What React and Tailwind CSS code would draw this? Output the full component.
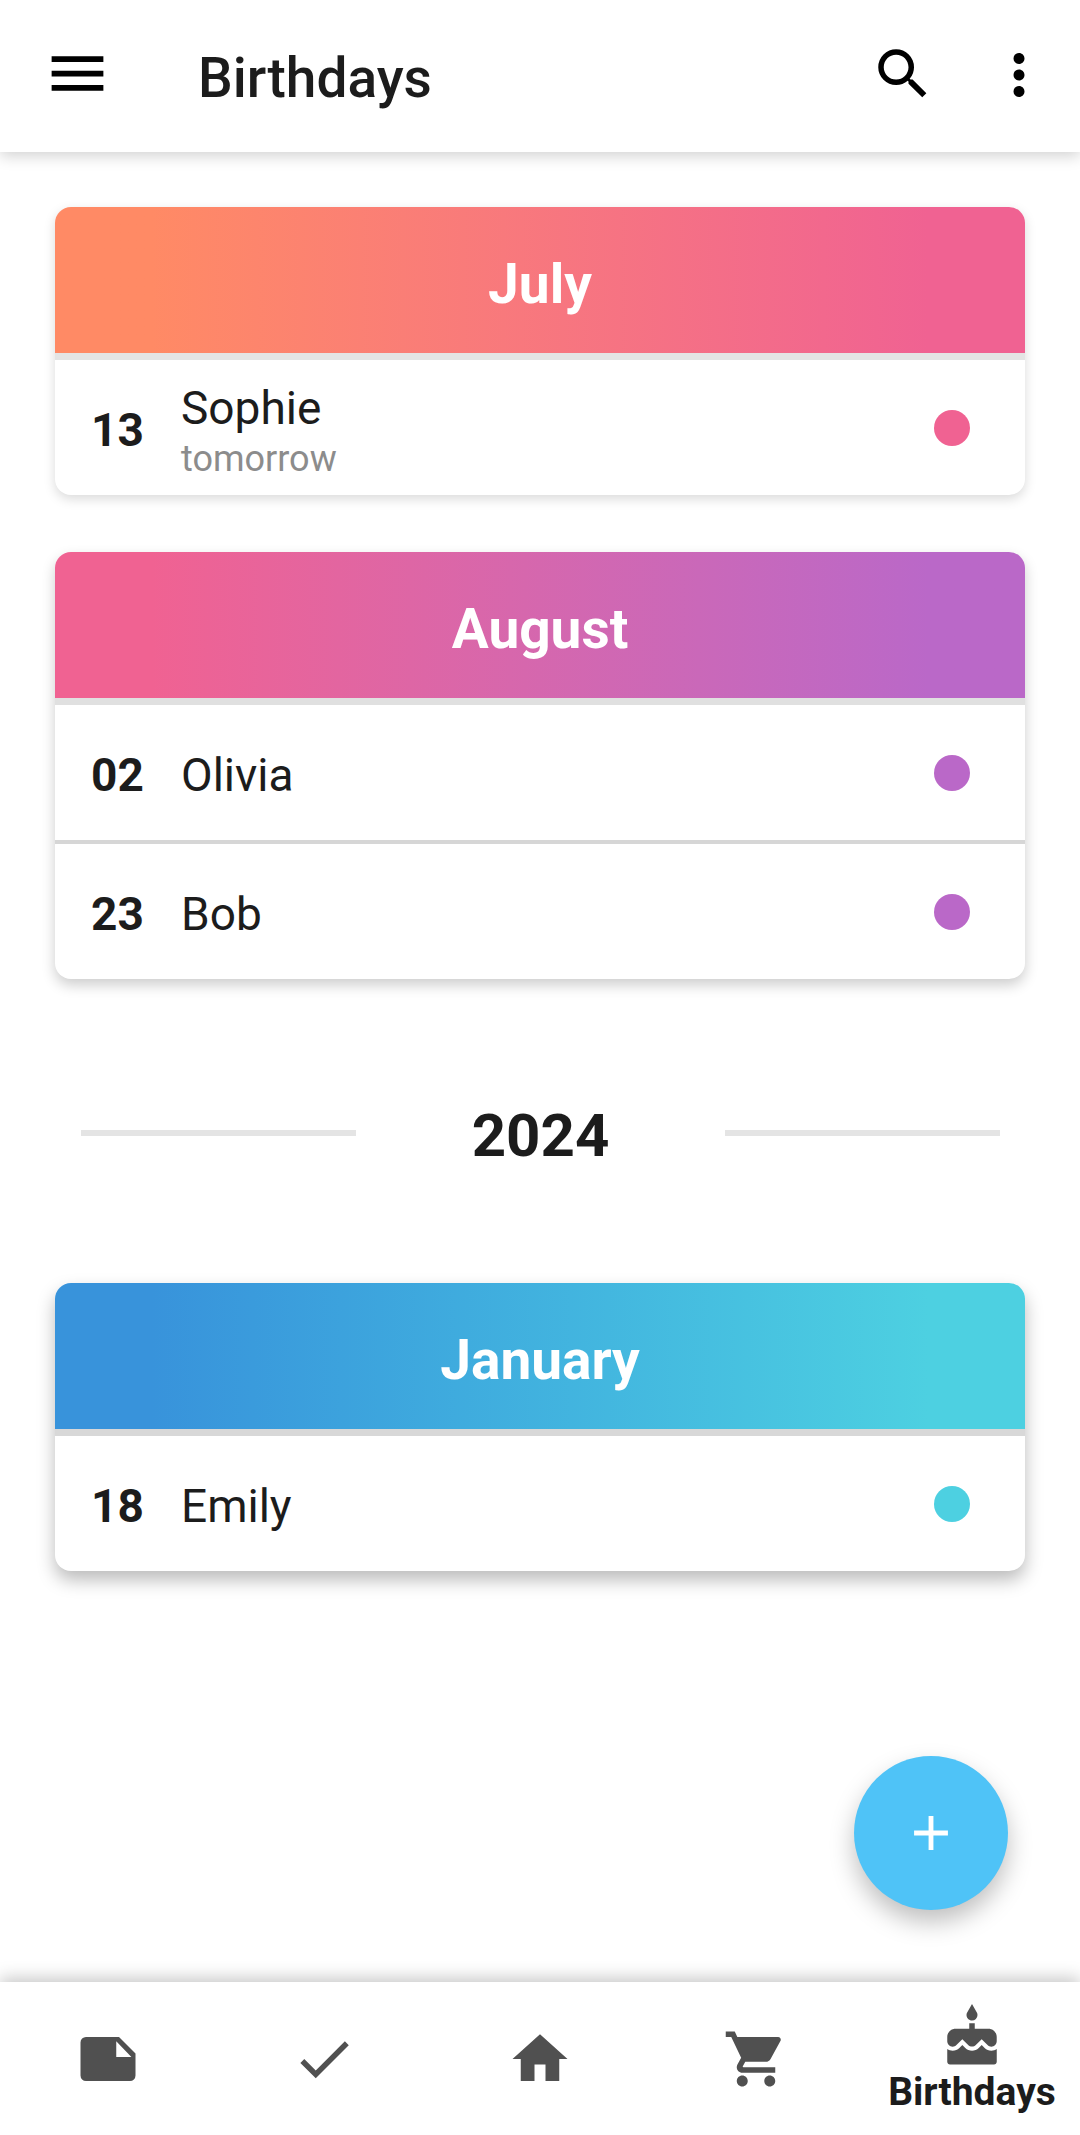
import { MdMenu, MdSearch, MdMoreVert, MdCheck, MdHome, MdShoppingCart, MdCake, MdAdd } from 'react-icons/md'

function NoteIcon({ className }) {
  return (
    <svg viewBox="0 0 24 24" className={className} fill="currentColor">
      <path fillRule="evenodd" d="M4 4h12l6 6v8a2 2 0 0 1-2 2H4a2 2 0 0 1-2-2V6a2 2 0 0 1 2-2zm11 1.500v5.800h5.500z" />
    </svg>
  )
}

const MONTHS = [
  {
    name: 'July',
    gradient: 'bg-gradient-to-r from-[#ff8a65] from-10% to-[#f06292] to-90%',
    dot: 'bg-[#f06292]',
    shadow: 'shadow-[0_4px_12px_rgba(0,0,0,0.15)]',
    band: 'border-[#e4e4e4]',
    people: [{ day: '13', name: 'Sophie', note: 'tomorrow' }],
  },
  {
    name: 'August',
    gradient: 'bg-gradient-to-r from-[#f06292] from-10% to-[#ba68c8] to-90%',
    dot: 'bg-[#ba68c8]',
    shadow: 'shadow-[0_6px_14px_rgba(0,0,0,0.2)]',
    band: 'border-[#e0e0e0]',
    people: [
      { day: '02', name: 'Olivia' },
      { day: '23', name: 'Bob' },
    ],
  },
]

const JANUARY = {
  name: 'January',
  gradient: 'bg-gradient-to-r from-[#3893db] from-10% to-[#4dd0e1] to-90%',
  dot: 'bg-[#4dd0e1]',
  shadow: 'shadow-[0_9px_18px_rgba(0,0,0,0.27)]',
  band: 'border-[#d8d8d8]',
  people: [{ day: '18', name: 'Emily' }],
}

function MonthCard({ month }) {
  return (
    <div className={`mx-[55px] overflow-hidden rounded-[16px] bg-white ${month.shadow}`}>
      <div className={`flex h-[146px] items-center justify-center pt-[8px] ${month.gradient}`}>
        <span className="text-[55px] font-bold text-white">{month.name}</span>
      </div>
      {month.people.map((p, i) => (
        <div
          key={p.day}
          className={`flex items-center pr-[55px] pl-[36px] ${i === 0 ? `h-[142px] border-t-[7px] ${month.band}` : 'h-[139px] border-t-[4px] border-[#d6d6d6]'}`}
        >
          <span className="w-[54px] pt-[6px] text-[46px] font-bold text-[#1c1c1c]">{p.day}</span>
          <div className={`ml-[36px] flex-1 ${p.note ? 'pt-[11px]' : 'pt-[4px]'}`}>
            <div className="text-[46px] leading-[52px] text-[#1c1c1c]">{p.name}</div>
            {p.note && <div className="text-[36px] leading-[50px] text-[#8c8c8c]">{p.note}</div>}
          </div>
          <div className={`h-[36px] w-[36px] rounded-full ${month.dot}`} />
        </div>
      ))}
    </div>
  )
}

export default function App() {
  return (
    <div className="relative flex h-[2135px] w-[1080px] flex-col overflow-hidden bg-white font-['Roboto',sans-serif]">
      {/* Header */}
      <div className="z-10 flex h-[152px] shrink-0 items-center bg-white pr-[28px] pl-[43px] shadow-[0_4px_14px_rgba(0,0,0,0.18)]">
        <MdMenu className="mb-[5px] h-[69px] w-[69px] text-black" />
        <span className="ml-[86px] flex-1 pt-[5px] text-[55px] font-medium text-[#1c1c1c]">Birthdays</span>
        <MdSearch className="mb-[4px] h-[66px] w-[66px] text-black" />
        <MdMoreVert className="mb-[3px] ml-[50px] h-[66px] w-[66px] text-black" />
      </div>

      {/* List */}
      <div className="flex flex-1 flex-col pt-[55px]">
        <div className="flex flex-col gap-[57px]">
          {MONTHS.map((m) => (
            <MonthCard key={m.name} month={m} />
          ))}
        </div>

        <div className="mt-[116px] mr-[80px] mb-[112px] ml-[81px] flex items-center justify-between">
          <div className="h-[6px] w-[275px] bg-[#e4e4e4]" />
          <span className="pt-[6px] text-[60px] leading-[70px] font-bold text-[#1c1c1c]">2024</span>
          <div className="h-[6px] w-[275px] bg-[#e4e4e4]" />
        </div>

        <MonthCard month={JANUARY} />
      </div>

      {/* FAB */}
      <div className="absolute top-[1756px] left-[854px] flex h-[154px] w-[154px] items-center justify-center rounded-full bg-[#4fc3f7] shadow-[0_12px_24px_rgba(0,0,0,0.25)]">
        <MdAdd className="h-[58px] w-[58px] text-white" />
      </div>

      {/* Bottom nav */}
      <div className="z-10 flex h-[153px] shrink-0 items-center justify-around bg-white text-[#505050] shadow-[0_-4px_16px_rgba(0,0,0,0.22)]">
        <div className="flex flex-1 justify-center pt-[1px]"><NoteIcon className="h-[66px] w-[66px]" /></div>
        <div className="flex flex-1 justify-center pt-[1px]"><MdCheck className="h-[66px] w-[66px]" /></div>
        <div className="flex flex-1 justify-center pt-[1px]"><MdHome className="h-[66px] w-[66px]" /></div>
        <div className="flex flex-1 justify-center pt-[1px]"><MdShoppingCart className="h-[66px] w-[66px]" /></div>
        <div className="flex flex-1 flex-col items-center">
          <MdCake className="h-[66px] w-[66px]" />
          <span className="text-[39px] leading-[44px] font-bold text-[#1c1c1c]">Birthdays</span>
        </div>
      </div>
    </div>
  )
}
